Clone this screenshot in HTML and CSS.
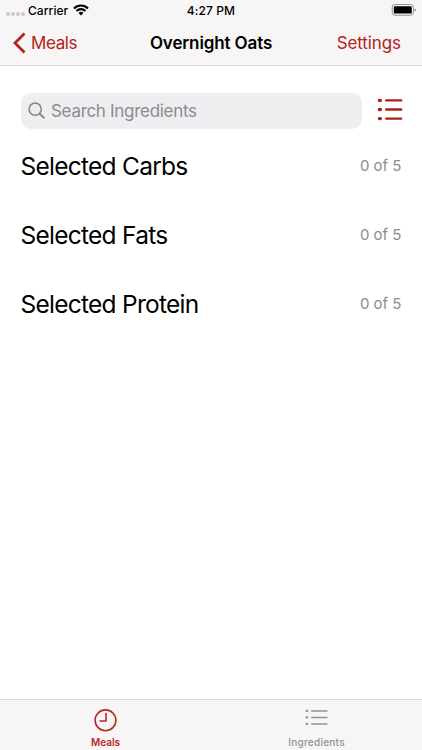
FILE: index.html
```html
<!DOCTYPE html>
<html lang="en">
<head>
<meta charset="utf-8">
<meta name="viewport" content="width=device-width, initial-scale=1">
<title>Overnight Oats</title>
<link rel="stylesheet" href="styles.css">
</head>
<body>
<div class="app">
  <header class="header">
    <div class="status">
      <div class="carrier">
        <span class="dots"><i></i><i></i><i></i><i></i></span>
        <span class="carrier-name">Carrier</span>
        <svg class="wifi" width="16" height="12" viewBox="0 0 16 12" fill="none" stroke="#000" stroke-width="2.1">
          <path d="M1 4.4a9.9 9.9 0 0 1 14 0M3.5 7a6.4 6.4 0 0 1 9 0"/>
          <path d="M8 11.4 5.6 9a3.4 3.4 0 0 1 4.8 0Z" fill="#000" stroke="none"/>
        </svg>
      </div>
      <span class="time">4:27 PM</span>
      <svg class="battery" width="26" height="12" viewBox="0 0 26 12">
        <rect x="1.2" y=".6" width="21.2" height="10.6" rx="2.8" fill="#fff" stroke="#8c8c8e"/>
        <rect x="2.8" y="2.2" width="18" height="7.4" rx="1.2"/>
        <path d="M23.6 4.2q1.4.5 1.4 1.7t-1.4 1.7Z" fill="#8c8c8e"/>
      </svg>
    </div>
    <nav class="navbar">
      <a class="back">
        <svg width="14" height="22" viewBox="0 0 14 22" fill="none" stroke="#b22319" stroke-width="2.8"><path d="M12.5 1.4 3 11l9.5 9.6"/></svg>
        <span>Meals</span>
      </a>
      <h1 class="title">Overnight Oats</h1>
      <a class="settings">Settings</a>
    </nav>
  </header>
  <main class="content">
    <div class="search-row">
      <div class="search">
        <svg width="18" height="18" viewBox="0 0 18 18" fill="none" stroke="#858589" stroke-width="1.5"><circle cx="7.2" cy="7.2" r="6.1"/><path d="m11.6 11.6 4.8 4.8" stroke-width="2"/></svg>
        <span>Search Ingredients</span>
      </div>
      <svg class="list-button" width="26" height="24" viewBox="0 0 26 24" fill="none" stroke="#b01f19" stroke-width="2.4" stroke-linecap="round"><path d="M9.2 2.4H24.2M9.2 11.5H24.2M9.2 20.6H24.2"/><path d="M2.4 2.4h1M2.4 11.5h1M2.4 20.6h1" stroke-width="3.4"/></svg>
    </div>
    <section class="group"><h2>Selected Carbs</h2><span class="count">0 of 5</span></section>
    <section class="group"><h2>Selected Fats</h2><span class="count">0 of 5</span></section>
    <section class="group"><h2>Selected Protein</h2><span class="count">0 of 5</span></section>
  </main>
  <footer class="tabs">
    <a class="tab active">
      <svg width="24" height="24" viewBox="0 0 24 24" fill="none" stroke="#b62a20" stroke-width="1.6"><circle cx="11.5" cy="12.3" r="10.4"/><path d="M12 5v8H5.5"/></svg>
      <span>Meals</span>
    </a>
    <a class="tab ingredients">
      <svg width="24" height="24" viewBox="0 0 24 24" fill="none" stroke="#929294" stroke-width="1.5"><path d="M6.2 2.9h16.3M6.2 9.4h16.3M6.2 15.9h16.3"/><path d="M.8 2.9h2.3M.8 9.4h2.3M.8 15.9h2.3" stroke-width="2.3"/></svg>
      <span>Ingredients</span>
    </a>
  </footer>
</div>
</body>
</html>
```

FILE: styles.css
```css
* { box-sizing: border-box; }
body { margin: 0; background: #fff; color: #000; font-family: Inter, "Liberation Sans", sans-serif; }
.app { width: 422px; height: 750px; display: flex; flex-direction: column; }
.header { height: 66px; background: #f7f5f6; border-bottom: 1px solid #d8d7d9; }
.status { height: 20px; display: grid; grid-template-columns: 1fr auto 1fr; align-items: center; padding: 1px 5px 0; font-size: 12px; line-height: 20px; font-weight: 500; }
.carrier { display: flex; align-items: center; padding-left: 1px; }
.dots { display: flex; gap: 1px; width: 22px; padding-top: 6px; }
.dots i { width: 4px; height: 4px; border-radius: 50%; background: #c9c8ca; }
.carrier-name { letter-spacing: .05px; }
.wifi { margin: -2px 0 0 5px; }
.time { letter-spacing: .1px; }
.battery { justify-self: end; margin-top: -2px; }
.navbar { height: 45px; display: grid; grid-template-columns: 1fr auto 1fr; align-items: center; padding: 1px 21px 0 12px; font-size: 17px; line-height: 24px; }
.back { display: flex; align-items: center; gap: 5px; color: #b22319; letter-spacing: -.4px; }
.title { margin: 0 -9px 0 0; font-size: 17px; font-weight: 600; letter-spacing: -.12px; }
.settings { justify-self: end; color: #b22319; letter-spacing: -.1px; }
.content { flex: 1; padding: 27px 19px 0 21px; }
.search-row { display: flex; align-items: center; gap: 15px; height: 37px; }
.search { width: 341px; height: 36px; margin-top: -1px; border-radius: 10px; background: #eeeef0; display: flex; align-items: center; gap: 5px; padding-left: 7px; color: #8b8b90; font-size: 17px; letter-spacing: -.3px; }
.list-button { margin-top: -4px; flex: none; }
.group { height: 69px; display: flex; justify-content: space-between; align-items: flex-start; padding: 19px 2px 0 0; line-height: 34px; }
.group h2 { margin: 0 0 0 -.5px; font-size: 24.5px; font-weight: 400; letter-spacing: -.74px; }
.count { margin-right: -.5px; font-size: 15px; color: #8c8c90; }
.tabs { height: 51px; display: flex; background: #f7f5f6; border-top: 1px solid #d8d7d9; }
.tab { flex: 1; display: flex; flex-direction: column; align-items: center; padding-top: 8px; font-size: 10px; line-height: 14px; font-weight: 500; color: #929294; }
.tab span { margin-top: 3px; }
.active { color: #b62a20; font-weight: 600; }
.ingredients { letter-spacing: .25px; }
```
